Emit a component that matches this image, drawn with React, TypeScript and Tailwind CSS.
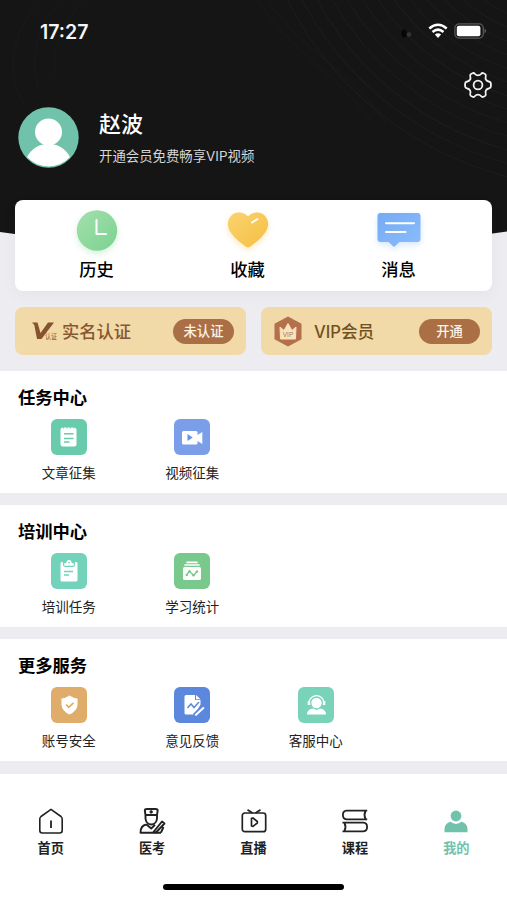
import type { ReactNode } from "react";

// Interface for an icon with a label below it
interface ServiceItem {
  label: string;
  color: string;
  icon: ReactNode;
}

// Interface for a tab in the bottom bar
interface TabItem {
  label: string;
  icon: ReactNode;
  active?: boolean;
}

// Profile page
export default function App() {
  return (
    <div
      className="flex h-[900px] w-[507px] flex-col overflow-hidden bg-[#ededf1] text-black"
      style={{
        fontFamily: '"Liberation Sans", "Noto Sans CJK SC", sans-serif',
      }}
    >
      <Header />
      <QuickLinks />
      <MemberCards />
      <main className="mt-4 flex flex-col gap-[12.3px]">
        <Section title="任务中心" items={taskItems} />
        <Section title="培训中心" items={trainingItems} />
        <Section title="更多服务" items={moreItems} />
      </main>
      <TabBar />
    </div>
  );
}

// Dark header with the status bar and the user
function Header() {
  return (
    <header className="relative h-[200px] shrink-0 text-white">
      <HeaderBackdrop />
      <div className="relative flex h-[62px] items-center justify-between pl-10 pr-[20px]">
        <span className="pt-[3px] font-[Inter] text-[19.5px] font-semibold leading-none text-[#f4f4f4]">
          17:27
        </span>
        <div className="flex items-center gap-1.5">
          <SignalDots />
          <WifiIcon />
          <BatteryIcon />
        </div>
      </div>
      <div className="relative flex h-[46px] items-center justify-end pr-[15px]">
        <SettingsIcon />
      </div>
      <div className="relative -mt-px flex items-center pl-[18px]">
        <Avatar />
        <div className="ml-5 flex flex-col">
          <h1 className="pt-px text-[22px] font-medium leading-7">赵波</h1>
          <p className="mt-2 pb-px font-[Inter,'Noto_Sans_CJK_SC'] text-[13.4px] leading-[18px] text-[#d6d6d6]">
            开通会员免费畅享VIP视频
          </p>
        </div>
      </div>
    </header>
  );
}

function HeaderBackdrop() {
  const rings = Array.from({ length: 16 }, (_, i) => 70 + i * 15);

  return (
    <svg
      className="absolute left-0 top-0"
      width="507"
      height="250"
      viewBox="0 0 507 250"
      fill="none"
    >
      <path d="M0 0H507V231.500Q254 270 0 232Z" fill="#151515" />
      <g stroke="#1d1d1d" strokeWidth="1">
        {rings.map((r) => (
          <ellipse
            key={r}
            cx="540"
            cy="-80"
            rx={r}
            ry={r * 0.85}
            transform="rotate(35 540 -80)"
          />
        ))}
        <path d="M25 107C4 72 12 28 42 0M38 88C28 52 42 18 62 0M55 75C51 48 65 20 84 0" stroke="#1a1a1a" />
        <path d="M268 0C300 50 350 70 385 122M258 0C290 52 338 74 372 122" stroke="#1c1b1a" />
      </g>
    </svg>
  );
}

function SignalDots() {
  return (
    <svg className="mr-[8px] mt-1.5" width="14" height="10" viewBox="0 0 14 10">
      <ellipse cx="4" cy="4.500" rx="2.500" ry="4" fill="#060606" />
      <circle cx="9" cy="5.500" r="2.200" fill="#353535" />
    </svg>
  );
}

function WifiIcon() {
  return (
    <svg width="20" height="16" viewBox="0 0 20 16" fill="none">
      <g stroke="#fff" strokeWidth="2.500">
        <path d="M1.300 5.500Q10 -1.900 18.700 5.500" />
        <path d="M4.500 9Q10 4.300 15.500 9" />
      </g>
      <path d="M6.900 11.500Q10 9 13.100 11.500L10 14.900Z" fill="#fff" />
    </svg>
  );
}

function BatteryIcon() {
  return (
    <svg width="33" height="16" viewBox="0 0 33 16" fill="none">
      <rect x="0.900" y="0.900" width="28.400" height="14.200" rx="4.200" stroke="#5a5a5a" strokeWidth="1.200" />
      <rect x="2.800" y="2.800" width="23.600" height="10.400" rx="2" fill="#fff" />
      <path d="M30.700 5.600Q33 8 30.700 10.400Z" fill="#777" />
    </svg>
  );
}

function SettingsIcon() {
  return (
    <svg
      width="28"
      height="28"
      viewBox="0 0 28 28"
      fill="none"
      stroke="#f2f2f2"
      strokeWidth="1.800"
      strokeLinejoin="round"
    >
      <path d="M8.500 2.200C9.500 1.700 10.300 2 11 3C12.500 4.800 15.500 4.800 17 3C17.700 2 18.500 1.700 19.500 2.200L21 3C22 3.600 22.100 4.500 21.700 5.700C21 8 22.300 10.100 24.700 10.500C26.200 10.800 26.900 11.400 26.900 12.400V15.600C26.900 16.600 26.200 17.200 24.700 17.500C22.300 17.900 21 20 21.700 22.300C22.100 23.500 22 24.400 21 25L19.500 25.800C18.500 26.300 17.700 26 17 25C15.500 23.200 12.500 23.200 11 25C10.300 26 9.500 26.300 8.500 25.800L7 25C6 24.400 5.900 23.500 6.300 22.300C7 20 5.700 17.900 3.300 17.500C1.800 17.200 1.100 16.600 1.100 15.600V12.400C1.100 11.400 1.800 10.800 3.300 10.500C5.700 10.100 7 8 6.300 5.700C5.900 4.500 6 3.600 7 3Z" />
      <circle cx="14" cy="14" r="4.400" />
    </svg>
  );
}

function Avatar() {
  return (
    <svg width="61" height="61" viewBox="0 0 61 61">
      <circle cx="30.500" cy="30.500" r="30.200" fill="#70c2ab" />
      <path d="M9 50C14 41 21 37 30.500 37S47 41 52 50A29.300 29.300 0 0 1 9 50Z" fill="#fff" />
      <circle cx="30.500" cy="25" r="13.500" fill="#fff" />
    </svg>
  );
}

// White card with history, favourites and messages
function QuickLinks() {
  const links = [
    { label: "历史", icon: <HistoryIcon /> },
    { label: "收藏", icon: <HeartIcon /> },
    { label: "消息", icon: <MessageIcon /> },
  ];

  return (
    <nav className="relative mx-[15px] flex h-[91px] shrink-0 rounded-lg bg-white px-[6px] shadow-[0_4px_14px_rgba(60,60,90,0.05)]">
      {links.map((link) => (
        <div key={link.label} className="flex w-[151px] flex-col items-center">
          {link.icon}
          <span className="mt-px text-[17.3px] font-medium leading-6">
            {link.label}
          </span>
        </div>
      ))}
    </nav>
  );
}

function HistoryIcon() {
  return (
    <svg className="overflow-visible" width="56" height="57" viewBox="0 0 56 57" fill="none">
      <defs>
        <linearGradient id="clock" x1="0" y1="0" x2="1" y2="1">
          <stop stopColor="#a4dfad" />
          <stop offset="1" stopColor="#7bd291" />
        </linearGradient>
      </defs>
      <g className="drop-shadow-[0_3px_3px_rgba(123,210,145,0.3)]">
        <circle cx="28" cy="30.500" r="20.200" fill="url(#clock)" />
      </g>
      <path d="M27.500 20V34H37" stroke="#fff" strokeWidth="2" strokeLinecap="round" strokeLinejoin="round" />
    </svg>
  );
}

function HeartIcon() {
  return (
    <svg className="overflow-visible" width="56" height="57" viewBox="0 0 56 57" fill="none">
      <defs>
        <linearGradient id="heart" x1="0" y1="0" x2="1" y2="1">
          <stop stopColor="#f9d370" />
          <stop offset="1" stopColor="#f6bf42" />
        </linearGradient>
      </defs>
      <path
        className="drop-shadow-[0_3px_3px_rgba(246,191,66,0.3)]"
        d="M28 16.500C32 12 39 11.500 43.500 14.500C49.500 19 49.500 27 44.500 33.500C40.500 39 34.500 43.500 30 46.800Q28 48.200 26 46.800C21.500 43.500 15.500 39 11.500 33.500C6.500 27 6.500 19 12.500 14.500C17 11.500 24 12 28 16.500Z"
        fill="url(#heart)"
      />
      <path d="M32 22.500L37.500 19" stroke="#fff" strokeWidth="2" strokeLinecap="round" />
    </svg>
  );
}

function MessageIcon() {
  return (
    <svg className="overflow-visible" width="56" height="57" viewBox="0 0 56 57" fill="none">
      <defs>
        <linearGradient id="message" x1="0" y1="0" x2="1" y2="1">
          <stop stopColor="#76aaf3" />
          <stop offset="1" stopColor="#8abdfb" />
        </linearGradient>
      </defs>
      <path
        className="drop-shadow-[0_3px_3px_rgba(125,178,248,0.3)]"
        d="M9.500 13H46.500Q49.500 13 49.500 16V39Q49.500 42 46.500 42H28.500L23 47L17.500 42H9.500Q6.500 42 6.500 39V16Q6.500 13 9.500 13Z"
        fill="url(#message)"
      />
      <path d="M15 23.300H43M15 32H34.500" stroke="#fff" strokeWidth="2" strokeLinecap="round" />
    </svg>
  );
}

// Verification and VIP cards
function MemberCards() {
  return (
    <div className="mx-[15px] mt-4 flex h-12 shrink-0 gap-[15px]">
      <div className="flex h-full w-[231px] items-center rounded-lg bg-[#f2d9a8] pl-4 pr-3">
        <VerifiedIcon />
        <span className="ml-1 mt-[3px] text-[17.3px] font-medium text-[#855832]">
          实名认证
        </span>
        <Pill text="未认证" />
      </div>
      <div className="flex h-full w-[231px] items-center rounded-lg bg-[#f2d9a8] pl-[13px] pr-3">
        <VipIcon />
        <span className="ml-3 mt-[2px] font-[Inter,'Noto_Sans_CJK_SC'] text-[16.6px] font-medium text-[#71521f]">
          VIP会员
        </span>
        <Pill text="开通" />
      </div>
    </div>
  );
}

function Pill({ text }: { text: string }) {
  return (
    <span className="ml-auto flex h-[25px] w-[61px] items-center justify-center rounded-full bg-[#ab6f45] pt-px text-[13.3px] font-medium text-[#fdf3e6]">
      {text}
    </span>
  );
}

function VerifiedIcon() {
  return (
    <svg width="27" height="20" viewBox="0 0 27 20">
      <path d="M1 1.500H6.500L9.500 12L17 1.500H23L10.500 18H6L3.300 4Z" fill="#86522f" />
      <text x="14" y="18" fontSize="7" fill="#86522f" textLength="12" lengthAdjust="spacingAndGlyphs">
        认证
      </text>
    </svg>
  );
}

function VipIcon() {
  return (
    <svg width="28" height="31" viewBox="0 0 28 31">
      <path d="M14 0.500L27.500 7.800V23.200L14 30.500L0.500 23.200V7.800Z" fill="#b3704a" />
      <path d="M6 11L10 14.500L14 7.500L18 14.500L22 11L21.500 23H6.500Z" fill="#fae3bb" stroke="#fae3bb" strokeLinejoin="round" />
      <text x="14" y="21" fontSize="6.500" textAnchor="middle" fill="#b3764c">
        VIP
      </text>
    </svg>
  );
}

// Section with a title and a row of services
function Section({ title, items }: { title: string; items: ServiceItem[] }) {
  return (
    <section className="h-[121.9px] bg-white pt-[14px]">
      <h2 className="pl-[18px] text-[17.3px] font-bold leading-[26px]">
        {title}
      </h2>
      <div className="mt-[7.5px] flex pl-[7px]">
        {items.map((item) => (
          <div
            key={item.label}
            className="flex w-[123.5px] flex-col items-center"
          >
            <div
              className="flex size-9 items-center justify-center rounded-md"
              style={{ backgroundColor: item.color }}
            >
              {item.icon}
            </div>
            <span className="mt-[9px] text-[13.5px] leading-5 text-[#222]">
              {item.label}
            </span>
          </div>
        ))}
      </div>
    </section>
  );
}

const taskItems: ServiceItem[] = [
  {
    label: "文章征集",
    color: "#68cbab",
    icon: (
      <svg width="36" height="36" viewBox="0 0 36 36" fill="none">
        <rect x="9.500" y="8.500" width="16" height="19" rx="2.500" fill="#fff" />
        <path d="M12.500 8V9.500M16 8V9.500M19.500 8V9.500M23 8V9.500" stroke="#68cbab" />
        <path d="M13 14.800H22.500M13 19.500H22.500M13 23H18.500" stroke="#68cbab" strokeWidth="1.400" />
      </svg>
    ),
  },
  {
    label: "视频征集",
    color: "#7a9fe8",
    icon: (
      <svg width="36" height="36" viewBox="0 0 36 36" fill="#fff">
        <rect x="8" y="12" width="15.500" height="13.500" rx="1.500" />
        <path d="M22 17L28.300 13V25L22 21Z" />
        <path d="M13.500 15L18.700 18.500L13.500 22Z" fill="#6591e6" />
      </svg>
    ),
  },
];

const trainingItems: ServiceItem[] = [
  {
    label: "培训任务",
    color: "#72d2ba",
    icon: (
      <svg width="36" height="36" viewBox="0 0 36 36" fill="none">
        <path d="M11 9H25Q26.500 9 26.500 10.500V27Q26.500 28.500 25 28.500H11Q9.500 28.500 9.500 27V10.500Q9.500 9 11 9Z" fill="#fff" />
        <path d="M12 8.500V11.500Q12 14 14.500 14H21.500Q24 14 24 11.500V8.500Z" fill="#72d2ba" />
        <path d="M13.200 12.700V10.300H15.300Q15.500 7 18 7T20.700 10.300H22.800V12.700Z" fill="#fff" />
        <circle cx="18" cy="9.600" r="0.900" fill="#72d2ba" />
        <path d="M13 18.500H22M13 22H18" stroke="#72d2ba" strokeWidth="1.400" />
      </svg>
    ),
  },
  {
    label: "学习统计",
    color: "#79c98d",
    icon: (
      <svg width="36" height="36" viewBox="0 0 36 36" fill="none">
        <path d="M13 9.300H23M11 12H25" stroke="#fff" strokeWidth="1.700" strokeLinecap="round" />
        <rect x="9" y="14" width="18" height="13" rx="1.500" fill="#fff" />
        <path d="M12.500 22L15.500 18L19.500 22.500L23 18.500" stroke="#79c98d" strokeWidth="1.400" />
        <g fill="#79c98d">
          <circle cx="12.800" cy="22" r="1.200" />
          <circle cx="15.500" cy="18.300" r="1.200" />
          <circle cx="19.500" cy="22.300" r="1.200" />
          <circle cx="23" cy="18.500" r="1.200" />
        </g>
      </svg>
    ),
  },
];

const moreItems: ServiceItem[] = [
  {
    label: "账号安全",
    color: "#dfad69",
    icon: (
      <svg width="36" height="36" viewBox="0 0 36 36" fill="none">
        <path d="M18.500 8.500Q22 11 26.500 11.500V18Q26 24 18.500 27.500Q11 24 10.500 18V11.500Q15 11 18.500 8.500Z" fill="#fff" />
        <path d="M15 17.500L17.700 20.300L22.500 15.800" stroke="#dfad69" strokeWidth="1.700" />
      </svg>
    ),
  },
  {
    label: "意见反馈",
    color: "#5b88dc",
    icon: (
      <svg width="36" height="36" viewBox="0 0 36 36" fill="none">
        <path d="M12 8H21V13H26.500V17.500L21 27.500H12Q10.500 27.500 10.500 26V9.500Q10.500 8 12 8Z" fill="#fff" />
        <path d="M22 8L26.500 12.300H22Z" fill="#fff" />
        <path d="M13.500 21L17 17L20 20.500L25 15" stroke="#5b88dc" strokeWidth="1.500" />
        <path d="M20.500 28.500L29.500 19.500" stroke="#5b88dc" strokeWidth="4.500" />
        <path d="M22 27.800L29.300 21" stroke="#fff" strokeWidth="2.100" strokeLinecap="round" />
      </svg>
    ),
  },
  {
    label: "客服中心",
    color: "#79d3b8",
    icon: (
      <svg width="36" height="36" viewBox="0 0 36 36" fill="none">
        <circle cx="18.500" cy="16" r="5.200" fill="#fff" />
        <path d="M11 15A7.600 7.600 0 0 1 26 15" stroke="#fff" strokeWidth="1.200" />
        <path d="M9.700 14H12.200V18H9.700ZM24.800 14H27.300V18H24.800Z" fill="#fff" />
        <path d="M9 27.500C9 23.500 12 22 15 21.500L18.500 23L22 21.500C25 22 28 23.500 28 27.500Z" fill="#fff" />
      </svg>
    ),
  },
];

// Bottom tab bar with the home indicator
function TabBar() {
  return (
    <footer className="mt-[12.6px] flex flex-1 flex-col items-center bg-white">
      <div className="flex w-full pt-[33px]">
        {tabItems.map((tab) => (
          <div
            key={tab.label}
            className={
              tab.active
                ? "flex flex-1 flex-col items-center text-[#70c2ab]"
                : "flex flex-1 flex-col items-center text-[#222]"
            }
          >
            {tab.icon}
            <span className="mt-[4.5px] text-[13.2px] font-bold leading-5">
              {tab.label}
            </span>
          </div>
        ))}
      </div>
      <div className="mt-auto mb-[10px] h-[6px] w-[181px] rounded-full bg-black" />
    </footer>
  );
}

const tabItems: TabItem[] = [
  {
    label: "首页",
    icon: (
      <svg width="28" height="28" viewBox="0 0 28 28" fill="none" stroke="currentColor" strokeWidth="1.600" strokeLinejoin="round">
        <path d="M14 2.300L24 9.500Q25.200 10.500 25.200 12V23.500Q25.200 26 22.700 26H5.300Q2.800 26 2.800 23.500V12Q2.800 10.500 4 9.500Z" />
        <path d="M14 13.500V21" strokeWidth="1.800" />
      </svg>
    ),
  },
  {
    label: "医考",
    icon: (
      <svg width="28" height="28" viewBox="0 0 28 28" fill="none" stroke="currentColor" strokeWidth="1.900" strokeLinejoin="round">
        <path d="M7.500 8L6.800 3.500Q6.900 2 9 2H17.500Q19.600 2 19.700 3.500L19 8ZM7.500 8V11.500Q8 17 13.200 17.500Q18.500 17 19 11.500V8M13.200 3.300V6.500M11.600 4.900H14.800" />
        <path d="M8.500 17.500Q2.500 18.500 2.500 25.700H23M8.500 17.500L13.200 21.500L17 17.800" />
        <path d="M15.500 25L24 14.500L26.500 16.500L18 25.500ZM23 25.500L25.500 20" />
      </svg>
    ),
  },
  {
    label: "直播",
    icon: (
      <svg width="28" height="28" viewBox="0 0 28 28" fill="none" stroke="currentColor" strokeWidth="1.700" strokeLinejoin="round">
        <rect x="2.300" y="6" width="23.400" height="18.700" rx="2.500" />
        <path d="M7.500 2.800L12.500 6M20.500 2.800L15.500 6" />
        <path d="M11.500 11.300L13 11L17.300 14.500V16L13 19.300L11.500 19Z" />
      </svg>
    ),
  },
  {
    label: "课程",
    icon: (
      <svg width="28" height="28" viewBox="0 0 28 28" fill="none" stroke="currentColor" strokeWidth="1.800" strokeLinejoin="round">
        <path d="M26.200 3.700H5.500Q1.900 4 1.900 8T5.500 12.300H26.200M24.500 4Q22.500 8 24.500 12" />
        <path d="M1.500 15.700H22.500Q26.100 16 26.100 20T22.500 24.300H1.500M3.500 16Q5.500 20 3.500 24" />
      </svg>
    ),
  },
  {
    label: "我的",
    active: true,
    icon: (
      <svg width="28" height="28" viewBox="0 0 28 28" fill="currentColor">
        <circle cx="14" cy="9" r="5.400" />
        <path d="M2.500 25.200V22.500Q2.500 16.500 8.500 14.800Q14 19 19.500 14.800Q25.500 16.500 25.500 22.500V25.200Z" />
      </svg>
    ),
  },
];
